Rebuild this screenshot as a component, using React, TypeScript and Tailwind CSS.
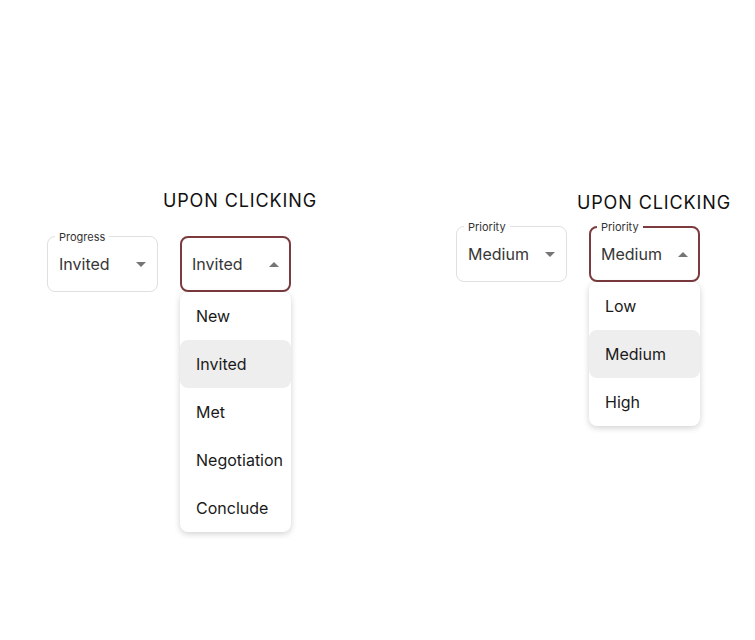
import React from 'react'

const fieldFont = { fontFamily: 'Inter, "Noto Sans", sans-serif' }

// small caret used by the select fields
const Caret = ({ up }: { up?: boolean }) => (
  <svg width="10" height="5" viewBox="0 0 10 5" className="shrink-0">
    {up ? <path d="M0 5 L5 0 L10 5 Z" fill="#757575" /> : <path d="M0 0 L5 5 L10 0 Z" fill="#757575" />}
  </svg>
)

interface SelectProps {
  label?: string
  value: string
  open?: boolean
  options?: string[]
}

const Select: React.FC<SelectProps> = ({ label, value, open, options = [] }) => {
  return (
    <div className="relative w-[111px]" style={fieldFont}>
      <div
        className={
          open
            ? 'flex h-[56px] items-center justify-between rounded-[8px] border-2 border-[#7b3b3f] px-[10px]'
            : 'flex h-[56px] items-center justify-between rounded-[8px] border border-[#e0e0e0] px-[11px]'
        }
      >
        <span className="text-[16px] text-[#363636]">{value}</span>
        <Caret up={open} />
      </div>

      {label && (
        <span className="absolute left-[8px] top-[-7px] bg-white px-[4px] text-[11px] leading-[16px] text-[#333333]">
          {label}
        </span>
      )}

      {open && (
        <div className="absolute left-0 top-full z-10 w-full rounded-[8px] bg-white shadow-[0_2px_6px_rgba(0,0,0,0.18)]">
          {options.map(opt => (
            <div
              key={opt}
              className={
                opt === value
                  ? 'flex h-[48px] items-center rounded-[8px] bg-[#eeeeee] px-[16px] text-[16px] text-[#1a1a1a]'
                  : 'flex h-[48px] items-center px-[16px] text-[16px] text-[#1a1a1a]'
              }
            >
              {opt}
            </div>
          ))}
        </div>
      )}
    </div>
  )
}

const Title = ({ className }: { className: string }) => (
  <div
    className={`whitespace-nowrap text-[18px] leading-[24px] tracking-[0.05em] text-[#111111] ${className}`}
    style={fieldFont}
  >
    UPON CLICKING
  </div>
)

export default function App() {
  const progress = ['New', 'Invited', 'Met', 'Negotiation', 'Conclude']
  const priority = ['Low', 'Medium', 'High']

  return (
    <div className="flex h-[640px] w-[755px] items-start bg-white">
      {/* Progress */}
      <div className="ml-[47px] mt-[189px] flex items-start gap-[22px]">
        <div className="mt-[47px]">
          <Select label="Progress" value="Invited" />
        </div>
        <div className="flex w-[111px] flex-col items-center">
          <Title className="mb-[23px] ml-[9px]" />
          <Select value="Invited" open options={progress} />
        </div>
      </div>

      {/* Priority */}
      <div className="ml-[165px] mt-[191px] flex items-start gap-[22px]">
        <div className="mt-[35px]">
          <Select label="Priority" value="Medium" />
        </div>
        <div className="flex w-[111px] flex-col items-center">
          <Title className="mb-[11px] ml-[19px]" />
          <Select label="Priority" value="Medium" open options={priority} />
        </div>
      </div>
    </div>
  )
}
